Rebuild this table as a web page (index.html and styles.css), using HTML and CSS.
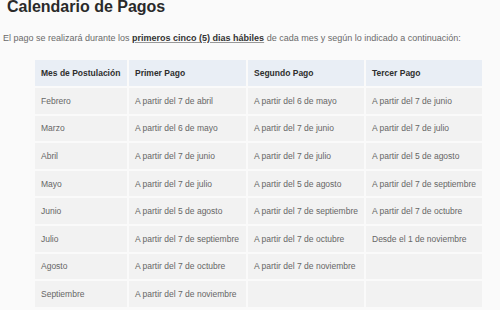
FILE: index.html
```html
<!DOCTYPE html>
<html lang="es">
<head>
<meta charset="utf-8">
<title>Calendario de Pagos</title>
<link rel="stylesheet" href="styles.css">
</head>
<body>
<h1 class="title">Calendario de Pagos</h1>
<p class="intro">El pago se realizará durante los <strong class="hl">primeros cinco (5) dias hábiles</strong> de cada mes y según lo indicado a continuación:</p>
<table class="cal">
  <colgroup>
    <col class="c1"><col class="c2"><col class="c3"><col class="c4">
  </colgroup>
  <thead>
    <tr><th>Mes de Postulación</th><th>Primer Pago</th><th>Segundo Pago</th><th>Tercer Pago</th></tr>
  </thead>
  <tbody>
    <tr><td>Febrero</td><td>A partir del 7 de abril</td><td>A partir del 6 de mayo</td><td>A partir del 7 de junio</td></tr>
    <tr><td>Marzo</td><td>A partir del 6 de mayo</td><td>A partir del 7 de junio</td><td>A partir del 7 de julio</td></tr>
    <tr><td>Abril</td><td>A partir del 7 de junio</td><td>A partir del 7 de julio</td><td>A partir del 5 de agosto</td></tr>
    <tr><td>Mayo</td><td>A partir del 7 de julio</td><td>A partir del 5 de agosto</td><td>A partir del 7 de septiembre</td></tr>
    <tr><td>Junio</td><td>A partir del 5 de agosto</td><td>A partir del 7 de septiembre</td><td>A partir del 7 de octubre</td></tr>
    <tr><td>Julio</td><td>A partir del 7 de septiembre</td><td>A partir del 7 de octubre</td><td>Desde el 1 de noviembre</td></tr>
    <tr><td>Agosto</td><td>A partir del 7 de octubre</td><td>A partir del 7 de noviembre</td><td></td></tr>
    <tr><td>Septiembre</td><td>A partir del 7 de noviembre</td><td></td><td></td></tr>
  </tbody>
</table>
</body>
</html>
```
FILE: styles.css
```css
html, body {
  margin: 0;
  background: #fafafa;
}
body {
  padding: 0 3px;
  font-family: "Liberation Sans", Arial, sans-serif;
  color: #666;
}
.title {
  margin: -1px 0 0 4px;
  font-size: 16px;
  line-height: 16px;
  font-weight: bold;
  color: #2a2a2a;
}
.intro {
  margin: 17px 0 0 0;
  font-size: 9px;
  line-height: 12px;
  color: #6a6a6a;
}
.hl {
  color: #333;
  text-decoration: underline;
  text-decoration-color: #999;
}
.cal {
  margin: 14px 0 0 30px;
  border-collapse: separate;
  border-spacing: 2px;
  table-layout: fixed;
  width: 451px;
  font-size: 8.5px;
}
.c1 { width: 92px; }
.c2 { width: 117px; }
.c3 { width: 116px; }
.c4 { width: 116px; }
.cal th, .cal td {
  height: 26px;
  padding: 0 6px;
  text-align: left;
  white-space: nowrap;
  box-sizing: border-box;
}
.cal th {
  background: #e9eef5;
  color: #2e2e2e;
  font-weight: bold;
}
.cal td {
  background: #f2f2f2;
  color: #666;
  height: 25.6px;
}
```
